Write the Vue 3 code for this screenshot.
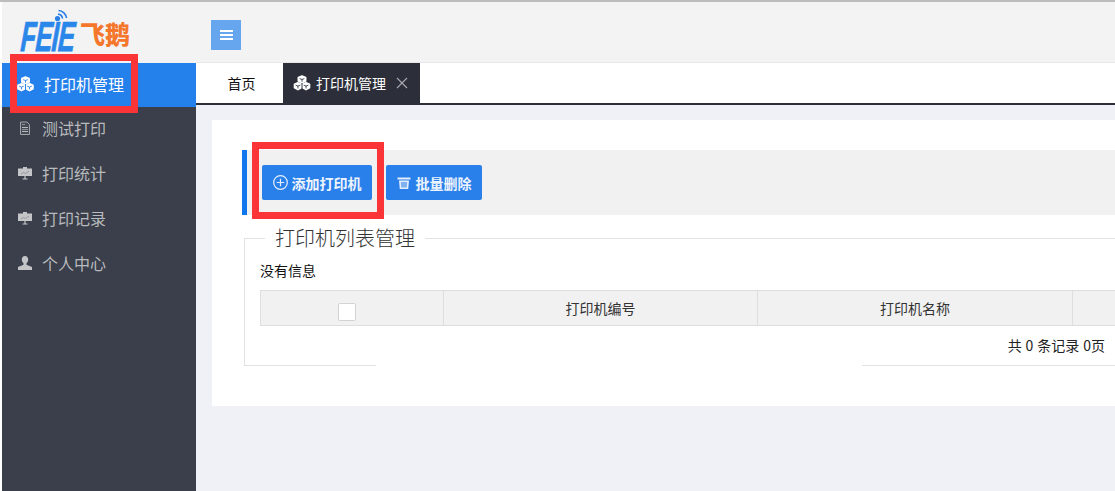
<script setup>
const menu = [
  { label: '测试打印', icon: 'file' },
  { label: '打印统计', icon: 'board' },
  { label: '打印记录', icon: 'board' },
  { label: '个人中心', icon: 'user' }
]
</script>

<template>
  <div class="page">
    <aside class="side">
      <div class="logo">
        <svg class="wifi" viewBox="0 0 14 13" width="14" height="13">
          <circle cx="3.500" cy="9.500" r="2.600" fill="#2a80e6" />
          <path d="M4 5.200a5 5 0 0 1 4.500 4.300M4.500 1.500a8.500 8.500 0 0 1 8 7.500" fill="none" stroke="#2a80e6" stroke-width="1.700" />
        </svg>
        <span class="feie">FEIE</span><span class="cn">飞鹅</span>
      </div>
      <div class="item active">
        <svg class="cubes" viewBox="0 0 16 15" width="17" height="16">
          <g fill="#fff" stroke="#fff" stroke-width="1.600" stroke-linejoin="round">
            <path d="M8 1l3.400 1.300v3.400L8 7.200 4.600 5.700V2.300z" />
            <path d="M4.200 7.300l3.200 1.300v3.400l-3.200 1.700L1 12V8.600z" />
            <path d="M11.800 7.300L15 8.600V12l-3.200 1.700L8.600 12V8.600z" />
          </g>
          <g fill="none" stroke="#2480ea" stroke-width=".8">
            <path d="M5.800 3.400L8 4.200l2.200-.8M8 4.200V6.300" />
            <path d="M2 9.500l2.200.9 2.200-.9M4.200 10.400V12.600" />
            <path d="M9.600 9.500l2.200.9 2.200-.9M11.800 10.400V12.600" />
          </g>
          <path d="M8 7.500v6" stroke="#2480ea" stroke-width=".9" />
        </svg>
        <span>打印机管理</span>
      </div>
      <div v-for="m in menu" :key="m.label" class="item">
        <svg class="mi" viewBox="0 0 14 14" width="14" height="14">
          <g v-if="m.icon === 'file'">
            <path d="M2.500 1h6.500l2.500 2.500v10h-9z" fill="#454a55" stroke="#9ea2a9" stroke-width="1" />
            <path d="M4 6.500h6M4 10.500h6" stroke="#b8babd" stroke-width="1" />
            <path d="M4 8.500h6" stroke="#8d9097" stroke-width="1" />
            <path d="M4 3.500h3" stroke="#8d9097" stroke-width="1" />
          </g>
          <g v-else-if="m.icon === 'board'">
            <path d="M0 2.500h14V10H0zM5 2.500V1h4v1.500z" fill="#c4c5c6" />
            <path d="M6.400 10h1.200v2.500H9.500v1h-5v-1h1.900z" fill="#c4c5c6" />
            <path d="M3 8L5.500 6.500l2 1L11 5" fill="none" stroke="#8a8c92" stroke-width=".8" />
          </g>
          <g v-else>
            <path d="M7 0c2 0 3.200 1.500 3.200 3.600 0 1.700-.9 3-1.700 3.700v1.400L14 11v3H0v-3l5.500-2.300V7.300C4.700 6.600 3.800 5.300 3.800 3.600 3.800 1.500 5 0 7 0z" fill="#c4c5c6" />
          </g>
        </svg>
        <span>{{ m.label }}</span>
      </div>
    </aside>

    <div class="right">
      <header class="top">
        <div class="burger"><i></i><i></i><i></i></div>
      </header>
      <nav class="tabs">
        <div class="tab home">首页</div>
        <div class="tab current">
          <svg viewBox="0 0 16 15" width="18" height="16">
            <g fill="#fff" stroke="#fff" stroke-width="1.600" stroke-linejoin="round">
              <path d="M8 1l3.400 1.300v3.400L8 7.200 4.600 5.700V2.300z" />
              <path d="M4.200 7.300l3.200 1.300v3.400l-3.200 1.700L1 12V8.600z" />
              <path d="M11.800 7.300L15 8.600V12l-3.200 1.700L8.600 12V8.600z" />
            </g>
            <g fill="none" stroke="#2c2f3a" stroke-width=".8">
              <path d="M5.800 3.400L8 4.200l2.200-.8M8 4.200V6.300" />
              <path d="M2 9.500l2.200.9 2.200-.9M4.200 10.400V12.600" />
              <path d="M9.600 9.500l2.200.9 2.200-.9M11.800 10.400V12.600" />
            </g>
            <path d="M8 7.500v6" stroke="#2c2f3a" stroke-width=".9" />
          </svg>
          <span>打印机管理</span>
          <svg class="close" viewBox="0 0 12 12" width="12" height="12">
            <path d="M1 1l10 10M11 1L1 11" stroke="#a9abb0" stroke-width="1.100" fill="none" />
          </svg>
        </div>
      </nav>
      <main class="main">
        <section class="card">
          <div class="toolbar">
            <button class="btn add">
              <svg viewBox="0 0 15 15" width="15" height="15">
                <circle cx="7.500" cy="7.500" r="6.800" fill="none" stroke="#e6f0fc" stroke-width="1.200" />
                <path d="M7.500 3.800v7.400M3.800 7.500h7.400" stroke="#e6f0fc" stroke-width="1.200" />
              </svg>
              添加打印机
            </button>
            <button class="btn del">
              <svg viewBox="0 0 14 14" width="14" height="14">
                <path d="M.5 1.500h13v2H.5z" fill="#e4eefb" />
                <path d="M2 4.500l.8 8.500h8.400L12 4.500z" fill="#e4eefb" />
                <path d="M3.800 6h6.400l-.4 5.500H4.200z" fill="#7fb1f0" />
              </svg>
              批量删除
            </button>
          </div>
          <fieldset class="box">
            <legend>打印机列表管理</legend>
            <p class="msg">没有信息</p>
            <div class="table">
              <div class="th c1"><span class="check"></span></div>
              <div class="th c2">打印机编号</div>
              <div class="th c3">打印机名称</div>
              <div class="th c4"></div>
            </div>
            <p class="count">共 0 条记录 0页</p>
            <div class="gap"></div>
          </fieldset>
        </section>
      </main>
    </div>

    <div class="mark mark1"></div>
    <div class="mark mark2"></div>
  </div>
</template>

<style>
html, body { margin: 0; overflow: hidden; background: #f0f1f6; }
</style>

<style scoped>
.page {
  position: relative;
  width: 1115px;
  height: 491px;
  display: flex;
  overflow: hidden;
  box-sizing: border-box;
  border-top: 2px solid #bdbdbd;
  padding-left: 2px;
  background: #fff;
  font-family: "Noto Sans CJK SC", "Liberation Sans", sans-serif;
  font-size: 14px;
  color: #222;
}
.side {
  width: 194px;
  flex: none;
  background: #3a3f4b;
  display: flex;
  flex-direction: column;
}
.logo {
  height: 61px;
  background: #f3f3f3;
  position: relative;
  box-sizing: border-box;
  display: flex;
  align-items: flex-start;
  padding: 15px 0 0 19px;
}
.wifi { position: absolute; left: 52px; top: 7px; }
.feie {
  display: block;
  width: 59px;
  height: 40px;
  font-family: "Liberation Sans", sans-serif;
  font-style: italic;
  font-weight: 700;
  font-size: 42px;
  line-height: 40px;
  letter-spacing: -1px;
  color: #2b86ea;
  -webkit-text-stroke: .8px #2b86ea;
  transform: scaleX(.6) skewX(-6deg);
  transform-origin: left center;
}
.cn {
  font-weight: 900;
  font-size: 25px;
  line-height: 32px;
  color: #f5772c;
}
.item {
  height: 45px;
  display: flex;
  align-items: center;
  gap: 10px;
  padding: 0 0 3px 16px;
  box-sizing: border-box;
  font-size: 16px;
  color: #b8babd;
}
.item.active {
  height: 44px;
  background: #2480ea;
  color: #fff;
  gap: 10px;
  padding-left: 15px;
}
.mi { flex: none; }
.right {
  flex: 1;
  min-width: 0;
  display: flex;
  flex-direction: column;
  background: #f0f1f6;
}
.top {
  height: 60px;
  background: #f3f3f3;
  border-bottom: 1px solid #e7e7e7;
  display: flex;
  align-items: flex-start;
  padding: 0 0 0 15px;
  flex: none;
}
.burger {
  width: 30px;
  height: 30px;
  margin-top: 18px;
  background: #66a6ee;
  display: flex;
  flex-direction: column;
  align-items: center;
  justify-content: center;
  gap: 2px;
}
.burger i {
  display: block;
  width: 13px;
  height: 2px;
  background: #fff;
}
.tabs {
  height: 40px;
  flex: none;
  display: flex;
  background: #fff;
  border-bottom: 2px solid #2c2f3a;
}
.tab {
  display: flex;
  align-items: center;
  font-size: 14px;
}
.home {
  width: 87px;
  justify-content: center;
  padding-left: 4px;
  box-sizing: border-box;
  color: #111;
}
.current {
  width: 137px;
  background: #2c2f3a;
  color: #fff;
  padding-left: 10px;
  box-sizing: border-box;
  gap: 5px;
}
.close { margin-left: 5px; }
.main { padding: 15px 0 0 16px; flex: 1; }
.card {
  height: 286px;
  background: #fff;
  padding: 30px 0 0 30px;
  box-sizing: border-box;
}
.toolbar {
  height: 65px;
  background: #f1f1f1;
  border-left: 5px solid #0f76ee;
  display: flex;
  align-items: center;
  gap: 14px;
  padding-left: 15px;
}
.btn {
  height: 35px;
  border: 0;
  border-radius: 2px;
  background: #2a80ea;
  color: #eef4fd;
  font-family: inherit;
  font-size: 14px;
  font-weight: 700;
  display: flex;
  align-items: center;
  justify-content: center;
  gap: 4px;
  padding: 0;
}
.add { width: 110px; }
.del { width: 96px; gap: 5px; }
.box {
  position: relative;
  margin: 10px 0 0 2px;
  padding: 0 0 0 15px;
  border: 1px solid #e2e2e2;
  border-right: 0;
  height: 141px;
  box-sizing: border-box;
  min-width: 0;
  width: 871px;
}
.box legend {
  margin-left: 5px;
  padding: 0 10px;
  font-size: 20px;
  line-height: 26px;
  color: #333;
  font-weight: 300;
  height: 26px;
}
.msg {
  margin: 9px 0 0;
  line-height: 20px;
  height: 20px;
  color: #111;
}
.table {
  display: flex;
  height: 36px;
  margin-top: 10px;
  box-sizing: border-box;
  border: 1px solid #dedede;
  border-right: 0;
  background: #f1f1f1;
  width: 855px;
}
.th {
  flex: none;
  display: flex;
  align-items: center;
  justify-content: center;
  box-sizing: border-box;
  border-right: 1px solid #dedede;
  color: #333;
}
.c1 { width: 183px; }
.c2 { width: 314px; }
.c3 { width: 315px; }
.c4 { flex: 1; border-right: 0; }
.check {
  width: 18px;
  height: 18px;
  box-sizing: border-box;
  background: #fff;
  border: 1px solid #d3d3d3;
  border-radius: 2px;
  position: relative;
  top: 4px;
  left: -5px;
}
.count {
  margin: 9px 10px 0 0;
  text-align: right;
  line-height: 20px;
  word-spacing: .8px;
  color: #222;
}
.gap {
  position: absolute;
  left: 131px;
  width: 486px;
  bottom: -2px;
  height: 3px;
  background: #fff;
}
.mark {
  position: absolute;
  box-sizing: border-box;
  border: 7px solid #fb3537;
  pointer-events: none;
}
.mark1 { left: 10px; top: 52px; width: 128px; height: 59px; }
.mark2 { left: 252px; top: 140px; width: 132px; height: 77px; }
</style>
